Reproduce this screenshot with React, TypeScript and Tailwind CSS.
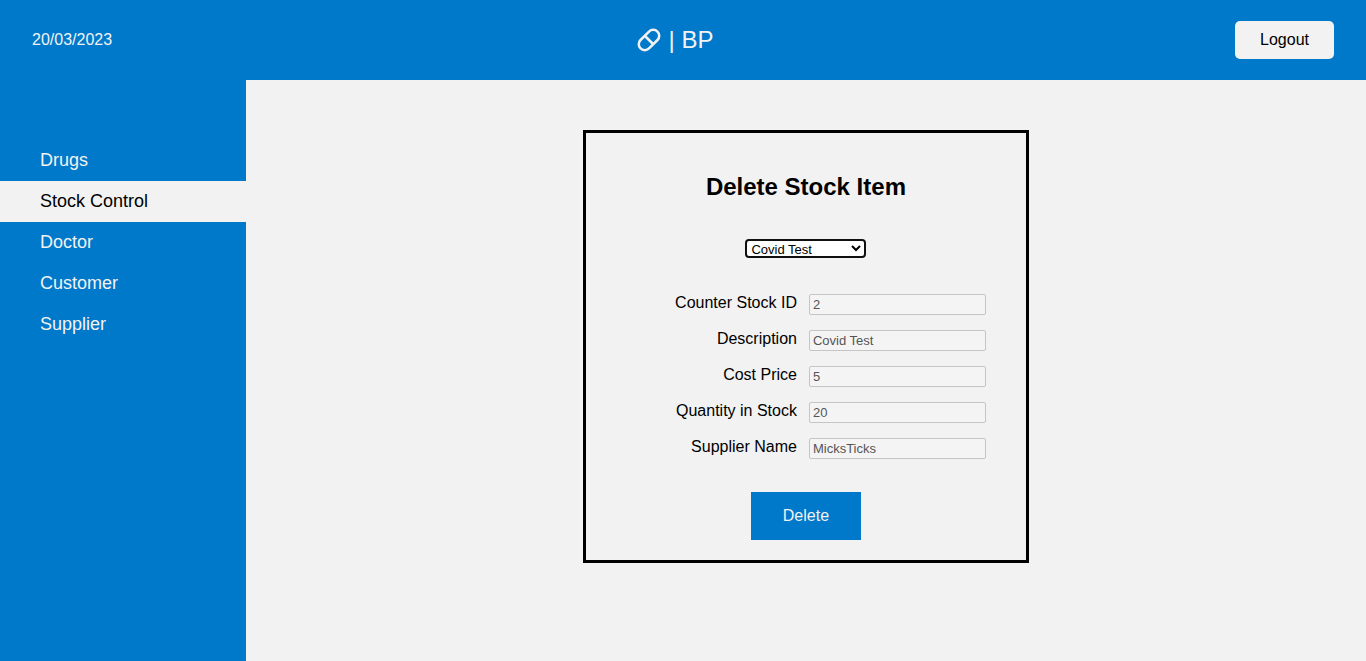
import { useState } from "react";

const navItems = ["Drugs", "Stock Control", "Doctor", "Customer", "Supplier"];

const fields = [
  { id: "stock-id", label: "Counter Stock ID", value: "2" },
  { id: "description", label: "Description", value: "Covid Test" },
  { id: "cost-price", label: "Cost Price", value: "5" },
  { id: "quantity", label: "Quantity in Stock", value: "20" },
  { id: "supplier-name", label: "Supplier Name", value: "MicksTicks" },
];

function CapsuleIcon() {
  return (
    <svg
      viewBox="0 0 24 24"
      className="size-6"
      fill="none"
      stroke="currentColor"
      strokeWidth="2.5"
      aria-hidden="true"
    >
      <g transform="rotate(-45 12 12)">
        <rect x="0" y="6" width="24" height="12" rx="6" />
        <path d="M12 6v12" />
      </g>
    </svg>
  );
}

function Header() {
  return (
    <header className="grid h-20 grid-cols-3 items-center bg-[#0079ca] px-8 text-[#f2f2f2]">
      <time dateTime="2023-03-20">20/03/2023</time>
      <div className="flex items-center justify-center gap-2 pr-4 text-2xl">
        <CapsuleIcon />
        <span>| BP</span>
      </div>
      <button type="button" className="h-[38px] justify-self-end rounded-[5px] bg-[#f2f2f2] px-[25px] text-black">
        Logout
      </button>
    </header>
  );
}

function Sidebar() {
  return (
    <nav className="w-[18%] shrink-0 bg-[#0079ca] pt-[60px]" aria-label="Main">
      <ul>
        {navItems.map((item) => (
          <li key={item}>
            <a
              href="#"
              aria-current={item === "Stock Control" ? "page" : undefined}
              className={
                item === "Stock Control"
                  ? "block bg-[#f2f2f2] py-2 pl-10 text-[18px] leading-[25px] text-black"
                  : "block py-2 pl-10 text-[18px] leading-[25px] text-[#f2f2f2]"
              }
            >
              {item}
            </a>
          </li>
        ))}
      </ul>
    </nav>
  );
}

function DeleteForm() {
  const [item, setItem] = useState("Covid Test");
  return (
    <form
      onSubmit={(e) => e.preventDefault()}
      className="flex w-full max-w-[446px] flex-col items-center border-[3px] border-black px-10 pt-[38px] pb-5"
    >
      <h1 className="text-2xl leading-8 font-bold">Delete Stock Item</h1>
      <select
        aria-label="Stock item"
        value={item}
        onChange={(e) => setItem(e.target.value)}
        className="mt-9 h-[19px] w-[121px] rounded-[4px] border-2 border-[#101010] bg-white text-[13px] leading-[15px] text-black outline-none"
      >
        <option>Covid Test</option>
      </select>
      <div className="mt-9 flex w-full flex-col gap-[15px]">
        {fields.map((f) => (
          <div key={f.id} className="flex h-[21px] items-center justify-end gap-3">
            <label htmlFor={f.id} className="pb-1 leading-[21px]">
              {f.label}
            </label>
            <input
              id={f.id}
              type="text"
              disabled
              value={f.value}
              className="h-[21px] w-[177px] rounded-[2px] border border-[#c5c5c5] bg-[#f4f4f4] px-[3px] text-[13px] text-[#545454]"
            />
          </div>
        ))}
      </div>
      <button type="submit" className="mt-[33px] h-12 bg-[#0079ca] px-8 text-[#f2f2f2]">
        Delete
      </button>
    </form>
  );
}

export default function App() {
  return (
    <div className="flex min-h-screen flex-col bg-[#f2f2f2] font-['Liberation_Sans',Arial,sans-serif] text-base text-black">
      <Header />
      <div className="flex grow">
        <Sidebar />
        <main className="flex grow items-start justify-center py-[50px]">
          <DeleteForm />
        </main>
      </div>
    </div>
  );
}
